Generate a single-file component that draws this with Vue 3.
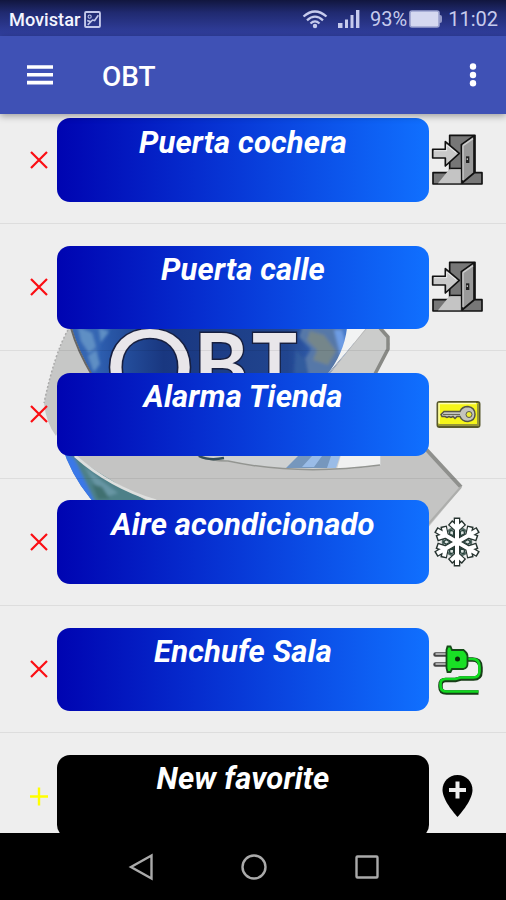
<script setup>
const favorites = [
  { name: 'Puerta cochera', icon: 'door' },
  { name: 'Puerta calle', icon: 'door' },
  { name: 'Alarma Tienda', icon: 'key' },
  { name: 'Aire acondicionado', icon: 'snow' },
  { name: 'Enchufe Sala', icon: 'plug' },
  { name: 'New favorite', icon: 'pin', add: true },
]
const arms = [0, 60, 120, 180, 240, 300]
</script>

<template>
  <div class="phone">
    <header class="status">
      <span class="carrier">Movistar</span>
      <svg class="shot" viewBox="0 0 16 16" width="17" height="17">
        <rect x="1" y="1" width="14" height="14" rx="1" fill="none" stroke="#c3c8ea" stroke-width="1.8" />
        <path d="M3.500 13 8 8.500l2 .5 3.500-5M3 9l3 1" fill="none" stroke="#c3c8ea" stroke-width="1.5" />
        <circle cx="5.300" cy="5.300" r="1.500" fill="none" stroke="#c3c8ea" />
      </svg>
      <span class="grow"></span>
      <svg class="wifi" viewBox="0 0 26 20" width="26" height="20" fill="none" stroke="#c6cbed" stroke-width="2.3">
        <path d="M1.5 7.5Q13-2.5 24.500 7.500M5 11.3Q13 4 21 11.3M8.5 14.5Q13 10.3 17.5 14.5" />
        <circle cx="13" cy="17" r="2.200" fill="#c6cbed" stroke="none" />
      </svg>
      <svg class="signal" viewBox="0 0 22 18" width="22" height="18" fill="#c6cbed">
        <path d="M0 13h4.5v5H0zM7 9.500h3V18H7zM12.500 5h3v13h-3zM18 0h3.400v18H18z" />
      </svg>
      <span class="pct">93%</span>
      <svg class="battery" viewBox="0 0 33 18" width="33" height="18">
        <path d="M30 5h1q2 0 2 2v4q0 2-2 2h-1z" fill="#9298c8" />
        <rect x="1" y="1" width="29" height="16" rx="2" fill="#d5d8f0" stroke="#9ca2cf" stroke-width="1.6" />
      </svg>
      <span class="clock">11:02</span>
    </header>
    <nav class="bar">
      <svg width="28" height="22" viewBox="0 0 28 22" fill="#fff">
        <path d="M1 1.200h26v3.600H1zM1 9h26v3.600H1zM1 16.800h26v3.600H1z" />
      </svg>
      <h1>OBT</h1>
      <svg class="dots" width="8" height="26" viewBox="0 0 8 26" fill="#fff">
        <circle cx="4" cy="4.500" r="3.200" /><circle cx="4" cy="13" r="3.200" /><circle cx="4" cy="21.300" r="3.200" />
      </svg>
    </nav>
    <main>
      <svg class="logo" viewBox="0 114 506 719" width="506" height="719">
        <defs>
          <linearGradient id="sea" x1="0" y1="0" x2="1" y2="0">
            <stop offset="0" stop-color="#467fd6" /><stop offset=".18" stop-color="#2856a6" />
            <stop offset=".35" stop-color="#193780" /><stop offset=".75" stop-color="#21458f" />
            <stop offset="1" stop-color="#4f8adf" />
          </linearGradient>
          <filter id="soft"><feGaussianBlur stdDeviation="1.5" /></filter>
          <clipPath id="ball"><path d="M40 325h320v220H40z" /></clipPath>
          <clipPath id="disc"><circle cx="210" cy="400" r="155" /></clipPath>
        </defs>
        <g clip-path="url(#ball)">
          <circle cx="210" cy="400" r="155" fill="url(#sea)" />
          <g clip-path="url(#disc)">
            <g filter="url(#soft)">
              <path d="M70 325h42l-12 20-3 22-12 10-15-30z" fill="#3566b3" />
              <path d="M78 327l14 6 4 14-7 6-8-12zM99 328l10 4-8 10zM88 356l8-6 4 14-6 8z" fill="#5f8fc4" />
              <path d="M303 325h38l9 32-15 20h-26l-4-18 6-10-12-12z" fill="#5778a8" />
              <path d="M310 331l14 4 12 16-8 14-15-5 4-10-10-10z" fill="#75868a" />
              <path d="M296 350l10 10 2 14h-14z" fill="#315b9e" />
              <path d="M334 330h8l8 26-7 10z" fill="#6d9ce4" />
              <path d="M60 450l22 6 75 48H60z" fill="#4d8088" />
              <path d="M60 450l14 8 22 46H70z" fill="#3b78e8" />
              <path d="M84 466l18 15 16 12-15 5z" fill="#6796a4" />
              <path d="M92 484l10 3 8 12H98z" fill="#3f6f70" />
            </g>
          </g>
        </g>
        <path d="M70 326Q55 352 44 403q2 20 12 33l28-60h9Q78 350 71 326z" fill="#c6c7c6" />
        <path d="M68 330Q55 352 44 403" fill="none" stroke="#aaa" stroke-width="1.500" stroke-dasharray="2 2" />
        <path d="M71 328Q77 350 93 377" fill="none" stroke="#666" stroke-width="2" />
        <path d="M347 328h20l-41 48q18-22 21-48z" fill="#f2f3f3" />
        <path d="M366 328h16l8 16-15 32h-47z" fill="#cbcccb" />
        <path d="M380 328l8 9v12l-13 25" fill="none" stroke="#888985" stroke-width="3.500" />
        <path d="M366 329l-38 46" fill="none" stroke="#bbb" />
        <path d="M74 450h350l38 37-36 43H210Q140 502 74 456z" fill="#c4c4c3" />
        <path d="M75 456Q110 487 156 501" fill="none" stroke="#dedfde" stroke-width="3" />
        <path d="M198 454h183v11q-40 8-106 3-44-3-77-14z" fill="#cfd1d1" />
        <path d="M300 454h40l-5 14h-49z" fill="#7697bd" />
        <path d="M312 456h10l-8 11h-12zM331 456h9l-4 12h-9z" fill="#9abce7" />
        <path d="M341 455h39v10q-22 4-43 4z" fill="#f0f1f1" />
        <path d="M198 456q12 5 30 5 70 15 152 4" fill="none" stroke="#939591" stroke-width="1.500" />
        <path d="M199 456q10 5 25 2" fill="none" stroke="#344e57" stroke-width="2.500" />
        <path d="M424 447l37 40" fill="none" stroke="#8f908d" stroke-width="4" />
        <path d="M461 487l-37 42" fill="none" stroke="#adaeac" stroke-width="2" />
        <g class="letters">
          <text class="ring" x="105" y="405" font-size="104" textLength="90" lengthAdjust="spacingAndGlyphs">O</text>
          <text x="194" y="395" font-size="87" textLength="54" lengthAdjust="spacingAndGlyphs">B</text>
          <text x="252" y="395" font-size="87" textLength="45" lengthAdjust="spacingAndGlyphs">T</text>
        </g>
      </svg>
      <ul>
        <li v-for="f in favorites" :key="f.name">
          <svg class="mark" viewBox="0 0 20 20" width="20" height="20" fill="none">
            <path v-if="f.add" d="M10 1.500v18M1 10.500h18" stroke="#ff0" stroke-width="2.400" />
            <path v-else d="M2 2l16 16M18 2 2 18" stroke="#fb0d12" stroke-width="2.200" />
          </svg>
          <button :class="{ add: f.add }">{{ f.name }}</button>
          <svg v-if="f.icon === 'door'" class="icon door" viewBox="76 70 156 156" stroke-linejoin="round">
            <path d="M132 77h76v112h21v34H82v-34h50z" fill="#777" stroke="#111" stroke-width="5" />
            <path d="M97 221l34-42h34v42z" fill="#c4c4c4" />
            <path d="M134 176h32" stroke="#111" stroke-width="4" />
            <path d="M167 105l38-27v112l-36 30z" fill="#999" stroke="#111" stroke-width="5" />
            <path d="M172 108l30-21M172 108v103" stroke="#ccc" stroke-width="4" fill="none" />
            <path d="M81 119h38V96l42 35-42 38v-24H81z" fill="#c9c9c9" stroke="#111" stroke-width="5" />
            <path d="M85 123h38v-17l28 23" fill="none" stroke="#eee" stroke-width="3" />
            <path d="M181 140h10v20h-10z" fill="#222" /><path d="M183 146h4v5h-4z" fill="#bbb" />
          </svg>
          <svg v-else-if="f.icon === 'key'" class="icon" viewBox="-1 0 52 52">
            <rect x="5.500" y="14" width="42" height="25" rx="2" fill="#f5f51a" stroke="#59592c" stroke-width="2" />
            <path d="M7 37h39V15.500" fill="none" stroke="#969638" stroke-width="2" />
            <path d="M7 35.500v-20h37" fill="none" stroke="#ffffb0" stroke-width="1.500" />
            <path d="M9 26.500l3-3h16q2-5 8-5 7 1 7 8 0 6-7 7-6 0-8-5h-3l-2 2-2-2-2 1-2-1-2 1-2-1h-3z" fill="#c4c4bd" stroke="#555548" stroke-width="1.500" />
            <path d="M11 26.500h17" stroke="#686858" />
            <circle cx="37" cy="26.500" r="3" fill="#ebeb37" stroke="#555" />
          </svg>
          <svg v-else-if="f.icon === 'snow'" class="icon" viewBox="0 0 52 52" fill="none">
            <circle cx="26" cy="27" r="14" stroke="#59706a" stroke-width="2.500" />
            <g v-for="pass in 2" :key="pass" :stroke="pass === 1 ? '#26332f' : '#fff'" :stroke-width="pass === 1 ? 6.6 : 4">
              <path v-for="a in arms" :key="a" :transform="`rotate(${a} 26 27)`" :d="pass === 1 ? 'M26 27V2.500M19 7.500l7 6 7-6' : 'M26 27V4M20 8.500l6 5.500 6-5.500'" />
            </g>
            <path v-for="a in arms" :key="a" :transform="`rotate(${a + 30} 26 27)`" d="M26 20l-2.500-4 2.500-2.500 2.500 2.500z" fill="#dfe5e3" stroke="#26403a" stroke-width="1.300" />
          </svg>
          <svg v-else-if="f.icon === 'plug'" class="icon" viewBox="-1.500 0 52 52" fill="none">
            <path d="M34 16.500h6q8 0 8 8v4q0 7-7 7H28l-5 1.500H13q-5 0-5 5v2q0 5.500 6 5.500h32" stroke="#173d17" stroke-width="4.500" />
            <path d="M34 16h6q7 0 7 8v4q0 6.500-6 6.500H28l-5 1.500H13q-5 0-5 5v2q0 5.500 6 5.500h32" stroke="#10d820" stroke-width="2.700" />
            <path d="M3 11.500h11M3 21.500h11" stroke="#444" stroke-width="4.500" stroke-linecap="round" /><path d="M3 11h11M3 21h11" stroke="#aaa" stroke-width="2" />
            <path d="M15 3.500h3l1.500 3.500H31q4 3 4 6v8q0 4-4 5H19.500L18 29h-3l-1-4V7z" fill="#19df25" stroke="#154b18" stroke-width="1.800" />
            <circle cx="25" cy="16" r="2.500" fill="#082b0a" />
          </svg>
          <svg v-else class="icon" viewBox="-.500 0 52 52">
            <path d="M26 5C17 5 11 12 11 20c0 11 15 27 15 27s15-16 15-27C41 12 35 5 26 5z" fill="#000" />
            <path d="M26 11.500v17M17.500 20h17" stroke="#eee" stroke-width="4" />
          </svg>
        </li>
      </ul>
    </main>
    <footer>
      <svg viewBox="0 0 28 28" width="28" height="28"><path d="M24.500 2.500v23L4 14z" /></svg>
      <svg viewBox="0 0 28 28" width="28" height="28"><circle cx="14" cy="14" r="11.500" /></svg>
      <svg viewBox="0 0 28 28" width="28" height="28"><rect x="3.500" y="3.500" width="21" height="21" rx="1" /></svg>
    </footer>
  </div>
</template>

<style>
body { margin: 0; }
</style>
<style scoped>
.phone { width: 506px; height: 900px; display: flex; flex-direction: column; overflow: hidden; font-family: Roboto, sans-serif; background: #eee; }
.status { height: 36px; flex: none; box-sizing: border-box; padding: 2px 8px 0 9px; display: flex; align-items: center; background: linear-gradient(#11163e, #202a70 35%, #2d3a93 80%, #303f9f); color: #c6cbed; font-size: 20px; }
.carrier { color: #f4f5ff; font-size: 18.200px; font-weight: 500; letter-spacing: 0; }
.shot { margin-left: 4px; }
.grow { flex: 1; }
.signal { margin-left: 10px; }
.pct { margin-left: 10px; }
.battery { margin-left: 2px; }
.clock { margin-left: 6px; }
.bar { height: 78px; flex: none; box-sizing: border-box; padding: 0 29px 0 26px; display: flex; align-items: center; background: #3f51b5; position: relative; z-index: 2; box-shadow: 0 2px 7px rgba(0, 0, 0, .35); }
h1 { margin: 3px 0 0 48px; flex: 1; font-size: 28px; line-height: 34px; font-weight: 500; color: #fff; }
main { height: 719px; flex: none; position: relative; overflow: hidden; }
.logo { position: absolute; left: 0; top: 0; }
.letters { font-family: Lato, sans-serif; font-weight: 700; fill: #e9e6ea; stroke: #171f40; stroke-width: 3; paint-order: stroke; }
.ring { font-weight: 400; }
ul { position: relative; list-style: none; margin: -17.200px 0 0; padding: 0; }
li { height: 127.300px; box-sizing: border-box; border-bottom: 1px solid rgba(0, 0, 0, .07); padding: 21.500px 22px 0 29px; display: flex; align-items: flex-start; }
.mark { margin-top: 31.300px; flex: none; }
button { margin: 0 0 0 8px; width: 372px; height: 83.500px; flex: none; border: 0; border-radius: 13px; padding: 4.500px 0 0; display: flex; justify-content: center; align-items: flex-start; background: linear-gradient(90deg, #0004b1, #1070ff); color: #fff; font: italic 700 31px/40px Roboto, sans-serif; letter-spacing: .15px; white-space: nowrap; }
button.add { background: #000; }
.icon { width: 52px; height: 52px; flex: none; margin: 15.200px 0 0 2px; }
.icon.door { margin-top: 14.600px; }
footer { height: 67px; flex: none; background: #000; display: flex; justify-content: center; align-items: center; gap: 85px; padding-left: 2px; }
footer svg { fill: none; stroke: #aaa; stroke-width: 2.400; }
</style>
